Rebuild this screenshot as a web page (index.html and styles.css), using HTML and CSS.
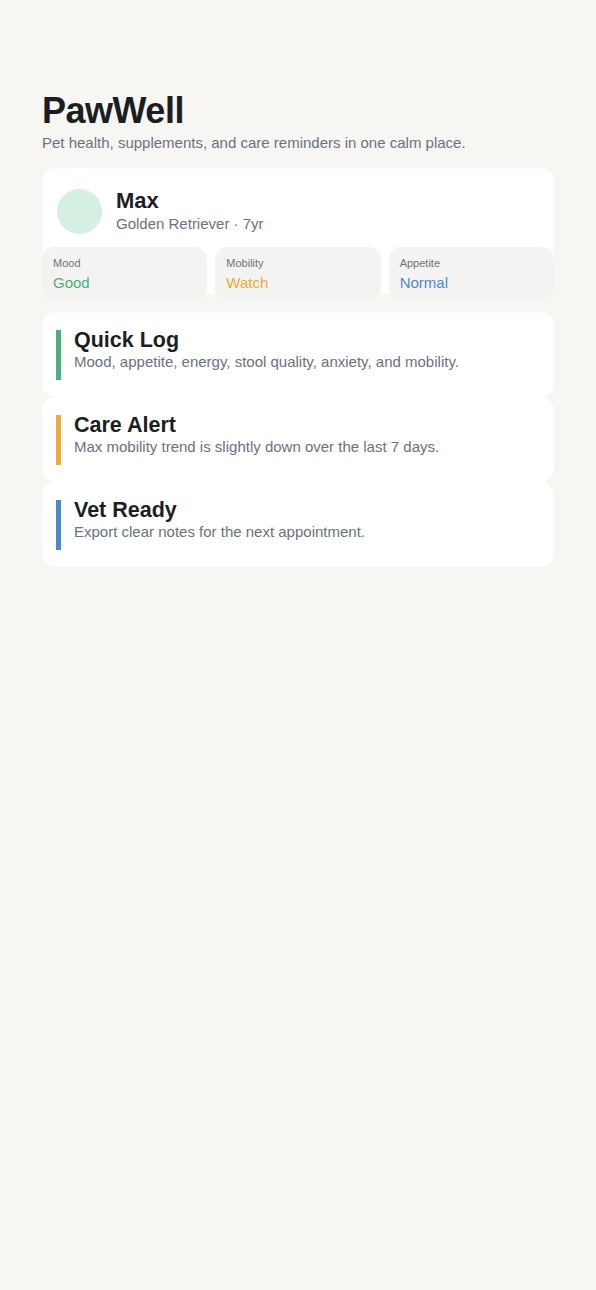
FILE: index.html
```html
<!DOCTYPE html>
<html lang="en">
<head>
    <meta charset="UTF-8">
    <meta name="viewport" content="width=device-width, initial-scale=1.0">
    <title>PawWell</title>
    <link rel="stylesheet" href="styles.css">
</head>
<body>
    <div class="page">
        <h1>PawWell</h1>
        <p class="tagline">Pet health, supplements, and care reminders in one calm place.</p>

        <div class="pet-card">
            <div class="pet">
                <div class="avatar"></div>
                <div>
                    <h2>Max</h2>
                    <p class="pet-meta">Golden Retriever · 7yr</p>
                </div>
            </div>
            <div class="stats">
                <div class="stat">
                    <span class="stat-label">Mood</span>
                    <span class="stat-value good">Good</span>
                </div>
                <div class="stat">
                    <span class="stat-label">Mobility</span>
                    <span class="stat-value watch">Watch</span>
                </div>
                <div class="stat">
                    <span class="stat-label">Appetite</span>
                    <span class="stat-value normal">Normal</span>
                </div>
            </div>
        </div>

        <div class="feature">
            <div class="feature-body green">
                <h3>Quick Log</h3>
                <p>Mood, appetite, energy, stool quality, anxiety, and mobility.</p>
            </div>
        </div>
        <div class="feature">
            <div class="feature-body orange">
                <h3>Care Alert</h3>
                <p>Max mobility trend is slightly down over the last 7 days.</p>
            </div>
        </div>
        <div class="feature">
            <div class="feature-body blue">
                <h3>Vet Ready</h3>
                <p>Export clear notes for the next appointment.</p>
            </div>
        </div>
    </div>
</body>
</html>
```

FILE: styles.css
```css
body {
    font-family: "Liberation Sans", Arial, sans-serif;
    margin: 0;
    padding: 0;
    background: #f7f6f2;
    color: #1b1f24;
}
.page {
    padding: 89px 42px 40px;
}
h1 {
    font-size: 36px;
    line-height: 43px;
    letter-spacing: -0.5px;
    margin: 0;
}
.tagline {
    margin: 0;
    font-size: 15px;
    line-height: 22px;
    color: #6b7280;
}
.pet-card {
    margin-top: 14px;
    height: 126px;
    box-sizing: border-box;
    padding: 20px 15px 0;
    background: #fff;
    border-radius: 14px;
}
.pet {
    display: flex;
    align-items: center;
    gap: 14px;
}
.avatar {
    width: 45px;
    height: 45px;
    border-radius: 50%;
    background: #d5f0e0;
}
.pet h2 {
    margin: 0;
    font-size: 22px;
    line-height: 26px;
}
.pet-meta {
    margin: 0;
    font-size: 15px;
    line-height: 20px;
    color: #6b7280;
}
.stats {
    display: grid;
    grid-template-columns: repeat(3, 1fr);
    gap: 8px;
    margin: 13px -15px 0;
}
.stat {
    display: flex;
    flex-direction: column;
    padding: 9px 11px 8px;
    background: #f3f4f1;
    border-radius: 12px;
}
.stat-label {
    font-size: 11px;
    line-height: 15px;
    color: #6b7280;
}
.stat-value {
    margin-top: 2px;
    font-size: 15px;
    line-height: 20px;
}
.good { color: #4caf7f; }
.watch { color: #f0a934; }
.normal { color: #4a88cc; }
.feature {
    background: #fff;
    border-radius: 14px;
    padding: 18px 14px 17px;
}
.pet-card + .feature {
    margin-top: 18px;
}
.feature-body {
    border-left: 5px solid;
    padding: 0 0 6px 13px;
}
.feature-body.green { border-color: #4caf7f; }
.feature-body.orange { border-color: #f2a93b; }
.feature-body.blue { border-color: #4a88cc; }
.feature h3 {
    margin: 0;
    font-size: 21.5px;
    line-height: 20px;
}
.feature p {
    margin: 0;
    font-size: 15px;
    line-height: 24px;
    color: #6b7280;
}
```
